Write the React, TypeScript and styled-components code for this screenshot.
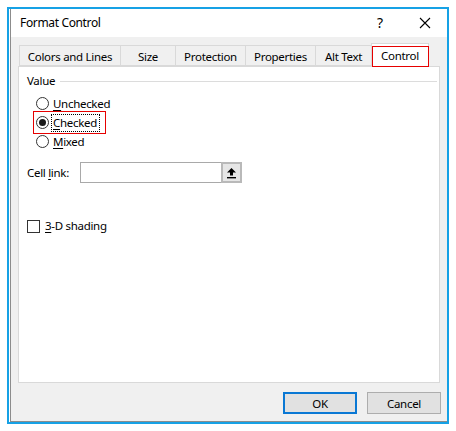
import React from "react";
import styled, { createGlobalStyle } from "styled-components";

const Global = createGlobalStyle`
  html, body { margin: 0; padding: 0; background: #ffffff; }
  body {
    font-family: "Noto Sans", "Segoe UI", sans-serif;
    font-size: 11.5px;
    letter-spacing: -0.3px;
    color: #000;
  }
  * { box-sizing: border-box; }
`;

const Window = styled.div`
  margin: 7px 0 0 7px;
  width: 442px;
  height: 417px;
  border: 2px solid #16a1e5;
  background: #ffffff;
  display: flex;
  flex-direction: column;
`;

const Inner = styled.div`
  flex: 1;
  margin-left: 1px;
  border-left: 1px solid #8c8c8c;
  border-bottom: 1px solid #8c8c8c;
  display: flex;
  flex-direction: column;
`;

const TitleBar = styled.div`
  height: 28px;
  display: flex;
  align-items: center;
  padding-left: 9px;
  padding-bottom: 1px;
  background: #ffffff;
`;

const TitleText = styled.div`
  flex: 1;
  font-size: 12px;
  letter-spacing: -0.35px;
`;

const TitleButtons = styled.div`
  display: flex;
  gap: 15px;
  margin-right: 6px;
`;

const TitleButton = styled.div`
  width: 30px;
  height: 20px;
  display: flex;
  align-items: center;
  justify-content: center;
  font-size: 14px;
  padding-right: 2px;
`;

const Body = styled.div`
  flex: 1;
  background: #f0f0f0;
  padding: 6px 7px 0 7px;
  display: flex;
  flex-direction: column;
`;

const TabRow = styled.div`
  height: 23px;
  display: flex;
  align-items: flex-end;
  padding-left: 1px;
  position: relative;
  z-index: 1;
`;

const Tab = styled.div<{ $w: number; $active?: boolean }>`
  position: relative;
  width: ${(p) => p.$w}px;
  height: ${(p) => (p.$active ? 24 : 21)}px;
  margin-bottom: ${(p) => (p.$active ? -1 : 0)}px;
  border: 1px solid #d9d9d9;
  border-bottom: ${(p) => (p.$active ? "none" : "1px solid #d9d9d9")};
  border-right: ${(p) => (p.$active ? "1px solid #d9d9d9" : "none")};
  background: ${(p) => (p.$active ? "#ffffff" : "#f0f0f0")};
  display: flex;
  align-items: center;
  justify-content: center;
  padding-top: 2px;
  padding-bottom: ${(p) => (p.$active ? 2 : 0)}px;
  ${(p) =>
    p.$active &&
    `
    &::after {
      content: "";
      position: absolute;
      left: 0;
      right: -1px;
      top: 2px;
      bottom: 0;
      border: 1px solid #e60000;
    }
  `}
`;

const Panel = styled.div`
  height: 317px;
  background: #ffffff;
  border: 1px solid #d9d9d9;
  display: flex;
  flex-direction: column;
  align-items: flex-start;
`;

const GroupHeader = styled.div`
  margin-top: 5px;
  height: 16px;
  width: 100%;
  display: flex;
  align-items: center;
  padding-left: 8px;
  padding-right: 2px;
`;

const GroupLine = styled.div`
  flex: 1;
  height: 1px;
  background: #dcdcdc;
  margin-left: 5px;
  margin-top: 3px;
`;

const RadioList = styled.div`
  margin-top: 6px;
  display: flex;
  flex-direction: column;
  align-items: flex-start;
`;

const RadioRow = styled.div<{ $marked?: boolean }>`
  height: 19px;
  margin-left: 16px;
  padding: 0 4px 0 1px;
  display: flex;
  align-items: center;
  outline: ${(p) => (p.$marked ? "1px solid #e60000" : "none")};
  outline-offset: 1px;
`;

const RadioCircle = styled.div<{ $checked?: boolean }>`
  width: 13px;
  height: 13px;
  border-radius: 50%;
  border: 1px solid #333333;
  background: #ffffff;
  display: flex;
  align-items: center;
  justify-content: center;
  &::after {
    content: "";
    width: 7px;
    height: 7px;
    border-radius: 50%;
    background: ${(p) => (p.$checked ? "#1a1a1a" : "transparent")};
  }
`;

const ChoiceLabel = styled.span<{ $focused?: boolean }>`
  margin-left: 2px;
  padding: 0 2px 1px 1px;
  line-height: 15px;
  border: 1px ${(p) => (p.$focused ? "dotted #000" : "solid transparent")};
`;

const Key = styled.span`
  text-decoration: underline;
  text-underline-offset: 2px;
`;

const FieldRow = styled.div`
  margin-top: 11px;
  margin-left: 8px;
  height: 21px;
  display: flex;
  align-items: center;
`;

const FieldLabel = styled.span`
  width: 53px;
  padding-bottom: 1px;
`;

const TextInput = styled.div`
  width: 141px;
  height: 21px;
  border: 1px solid #a9a9a9;
  border-right: none;
  background: #ffffff;
`;

const PickButton = styled.div`
  width: 21px;
  height: 21px;
  border: 2px solid #b9b9b9;
  background: #e6e6e6;
  display: flex;
  align-items: center;
  justify-content: center;
`;

const CheckRow = styled.div`
  margin-top: 35px;
  margin-left: 8px;
  height: 16px;
  display: flex;
  align-items: center;
`;

const CheckBox = styled.div`
  width: 13px;
  height: 13px;
  border: 1px solid #333333;
  background: #ffffff;
  margin-right: 5px;
`;

const CheckText = styled.span`
  padding-bottom: 1px;
`;

const ButtonRow = styled.div`
  margin-top: 9px;
  display: flex;
  justify-content: flex-end;
  gap: 10px;
  margin-right: -1px;
`;

const DlgButton = styled.div<{ $default?: boolean }>`
  width: 74px;
  height: 22px;
  border: ${(p) => (p.$default ? "2px solid #0a78d4" : "1px solid #adadad")};
  background: #e1e1e1;
  display: flex;
  align-items: center;
  justify-content: center;
`;

const tabs: { label: string; w: number; active?: boolean }[] = [
  { label: "Colors and Lines", w: 101 },
  { label: "Size", w: 55 },
  { label: "Protection", w: 70 },
  { label: "Properties", w: 70 },
  { label: "Alt Text", w: 56 },
  { label: "Control", w: 58, active: true },
];

export default function App() {
  return (
    <>
      <Global />
      <Window>
        <Inner>
          <TitleBar>
            <TitleText>Format Control</TitleText>
            <TitleButtons>
              <TitleButton>?</TitleButton>
              <TitleButton>
                <svg width="12" height="12" viewBox="0 0 12 12">
                  <path d="M1 1 L11 11 M11 1 L1 11" stroke="#000" strokeWidth="1.1" />
                </svg>
              </TitleButton>
            </TitleButtons>
          </TitleBar>
          <Body>
            <TabRow>
              {tabs.map((t) => (
                <Tab key={t.label} $w={t.w} $active={t.active}>
                  {t.label}
                </Tab>
              ))}
            </TabRow>
            <Panel>
              <GroupHeader>
                <span>Value</span>
                <GroupLine />
              </GroupHeader>
              <RadioList>
                <RadioRow>
                  <RadioCircle />
                  <ChoiceLabel>
                    <Key>U</Key>nchecked
                  </ChoiceLabel>
                </RadioRow>
                <RadioRow $marked>
                  <RadioCircle $checked />
                  <ChoiceLabel $focused>
                    <Key>C</Key>hecked
                  </ChoiceLabel>
                </RadioRow>
                <RadioRow>
                  <RadioCircle />
                  <ChoiceLabel>
                    <Key>M</Key>ixed
                  </ChoiceLabel>
                </RadioRow>
              </RadioList>
              <FieldRow>
                <FieldLabel>
                  Cell <Key>l</Key>ink:
                </FieldLabel>
                <TextInput />
                <PickButton>
                  <svg width="11" height="12" viewBox="0 0 11 12">
                    <path d="M5.5 1 L10 5.5 L7 5.5 L7 8.5 L4 8.5 L4 5.5 L1 5.5 Z" fill="#000" />
                    <rect x="1" y="10" width="9" height="1.4" fill="#000" />
                  </svg>
                </PickButton>
              </FieldRow>
              <CheckRow>
                <CheckBox />
                <CheckText>
                  <Key>3</Key>-D shading
                </CheckText>
              </CheckRow>
            </Panel>
            <ButtonRow>
              <DlgButton $default>OK</DlgButton>
              <DlgButton>Cancel</DlgButton>
            </ButtonRow>
          </Body>
        </Inner>
      </Window>
    </>
  );
}
